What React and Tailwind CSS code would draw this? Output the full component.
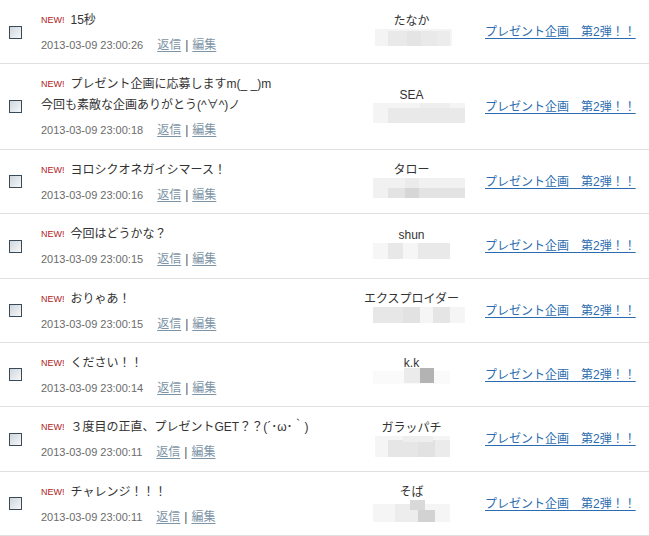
import React from "react";

const rows = [
  {
    lines: ["15秒"],
    date: "2013-03-09 23:00:26",
    name: "たなか",
    blur: [
      [30, 0, 77, 17, "#f4f4f4"],
      [43, 2, 62, 15, "#e9e9e9"],
      [62, 2, 14, 15, "#e4e4e4"],
      [92, 2, 13, 15, "#ececec"],
    ],
  },
  {
    lines: ["プレゼント企画に応募しますm(_ _)m", "今回も素敵な企画ありがとう(^∀^)ノ"],
    date: "2013-03-09 23:00:18",
    name: "SEA",
    blur: [
      [28, 0, 92, 20, "#f4f4f4"],
      [43, 5, 77, 15, "#e9e9e9"],
      [75, 0, 30, 5, "#eeeeee"],
    ],
  },
  {
    lines: ["ヨロシクオネガイシマース！"],
    date: "2013-03-09 23:00:16",
    name: "タロー",
    blur: [
      [28, 0, 92, 20, "#f1f1f1"],
      [43, 10, 77, 10, "#e3e3e3"],
      [60, 10, 14, 10, "#d6d6d6"],
      [60, 0, 14, 10, "#ebebeb"],
    ],
  },
  {
    lines: ["今回はどうかな？"],
    date: "2013-03-09 23:00:15",
    name: "shun",
    blur: [
      [28, 0, 77, 16, "#f6f6f6"],
      [43, 0, 15, 16, "#e8e8e8"],
      [73, 0, 32, 16, "#e9e9e9"],
    ],
  },
  {
    lines: ["おりゃあ！"],
    date: "2013-03-09 23:00:15",
    name: "エクスプロイダー",
    blur: [
      [28, 0, 92, 16, "#f5f5f5"],
      [28, 0, 30, 16, "#e7e7e7"],
      [58, 0, 17, 16, "#e2e2e2"],
      [88, 0, 17, 16, "#e5e5e5"],
    ],
  },
  {
    lines: ["ください！！"],
    date: "2013-03-09 23:00:14",
    name: "k.k",
    blur: [
      [28, 0, 77, 13, "#fafafa"],
      [59, -3, 16, 15, "#ebebeb"],
      [75, -3, 14, 15, "#b3b3b3"],
    ],
  },
  {
    lines: ["３度目の正直、プレゼントGET？？(´･ω･｀)"],
    date: "2013-03-09 23:00:11",
    name: "ガラッパチ",
    blur: [
      [30, 0, 75, 21, "#f5f5f5"],
      [43, 4, 30, 17, "#e6e6e6"],
      [73, 4, 17, 17, "#e2e2e2"],
      [90, 4, 15, 17, "#ebebeb"],
      [58, 0, 30, 6, "#eeeeee"],
    ],
  },
  {
    lines: ["チャレンジ！！！"],
    date: "2013-03-09 23:00:11",
    name: "そば",
    blur: [
      [28, 4, 77, 18, "#f5f5f5"],
      [50, 4, 25, 18, "#ededed"],
      [65, 0, 15, 10, "#d9d9d9"],
      [73, 10, 17, 12, "#d2d2d2"],
    ],
  },
];

function Checkbox() {
  return (
    <div className="w-[13px] h-[13px] border border-[#3a4a58] bg-linear-to-br from-[#cfd7dd] to-[#f6f7f8]" />
  );
}

function Row({ r }) {
  return (
    <div className="flex border-b border-[#dfdfdf] pt-[10px] pb-[9.4px]">
      <div className="w-[41px] shrink-0 flex items-center pl-[9px]">
        <Checkbox />
      </div>
      <div className="flex-1 min-w-0">
        {r.lines.map((l, i) => (
          <div key={i} className="text-[12px] leading-[21px] text-[#333] whitespace-nowrap">
            {i === 0 && (
              <span className="text-[9px] text-[#b01e1e] mr-[6px] align-[1px]">NEW!</span>
            )}
            {l}
          </div>
        ))}
        <div className="mt-[5px] leading-[18px] flex items-center whitespace-nowrap">
          <span className="text-[11px] text-[#6b6b6b]">{r.date}</span>
          <span className="ml-[14px] text-[12px] text-[#7d95a6] underline underline-offset-2">返信</span>
          <span className="mx-[4px] text-[12px] text-[#4a5a66]">|</span>
          <span className="text-[12px] text-[#7d95a6] underline underline-offset-2">編集</span>
        </div>
      </div>
      <div className="w-[132px] shrink-0 flex flex-col justify-center">
        <div className="text-[12px] leading-[16px] text-[#333] text-center pl-[1px] whitespace-nowrap">{r.name}</div>
        <svg width="132" height="23" className="block overflow-visible">
          {r.blur.map((b, i) => (
            <rect key={i} x={b[0]} y={b[1]} width={b[2]} height={b[3]} fill={b[4]} />
          ))}
        </svg>
      </div>
      <div className="w-[172px] shrink-0 flex items-center pl-[8px]">
        <span className="text-[12px] text-[#2b6cb0] underline underline-offset-2 whitespace-nowrap">
          プレゼント企画　第2弾！！
        </span>
      </div>
    </div>
  );
}

export default function App() {
  return (
    <div
      className="w-[649px] h-[536px] overflow-hidden bg-white"
      style={{ fontFamily: '"Liberation Sans", "Noto Sans CJK JP", sans-serif' }}
    >
      {rows.map((r, i) => (
        <Row key={i} r={r} />
      ))}
    </div>
  );
}
